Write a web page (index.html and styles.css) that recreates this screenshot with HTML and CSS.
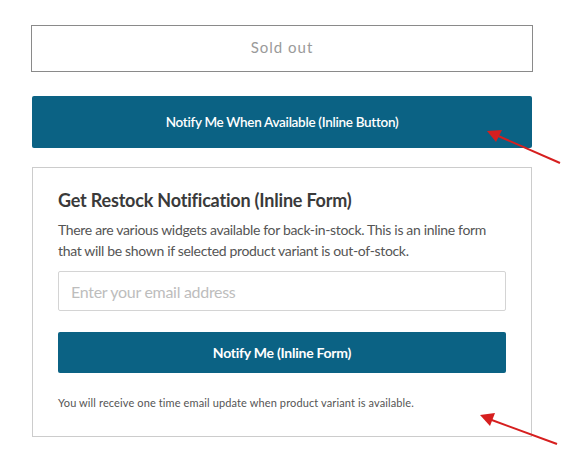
FILE: index.html
```html
<!DOCTYPE html>
<html>
<head>
<meta charset="utf-8">
<link rel="stylesheet" href="styles.css">
</head>
<body>
<div class="page">
  <div class="soldout">Sold out</div>
  <button class="btn btn-inline">Notify Me When Available (Inline Button)</button>
  <div class="form-box">
    <h2 class="form-title">Get Restock Notification (Inline Form)</h2>
    <p class="form-desc">There are various widgets available for back-in-stock. This is an inline form that will be shown if selected product variant is out-of-stock.</p>
    <input class="email" type="text" placeholder="Enter your email address">
    <button class="btn btn-form">Notify Me (Inline Form)</button>
    <p class="form-note">You will receive one time email update when product variant is available.</p>
  </div>
  <svg class="arrows" width="580" height="468" viewBox="0 0 580 468">
    <g stroke="#d61f1f" stroke-width="2" fill="none">
      <line x1="560" y1="163" x2="496" y2="135"/>
      <line x1="557" y1="444" x2="489" y2="419"/>
    </g>
    <g fill="#d61f1f">
      <polygon points="487,131 502,130 496,142"/>
      <polygon points="480,415 495,413 490,426"/>
    </g>
  </svg>
</div>
</body>
</html>
```

FILE: styles.css
```css
html, body {
  margin: 0;
  padding: 0;
  background: #ffffff;
}
.page {
  position: relative;
  width: 580px;
  height: 468px;
  padding: 25px 0 0 31px;
  box-sizing: border-box;
  font-family: Lato, "Liberation Sans", sans-serif;
}
.soldout {
  width: 502px;
  height: 47px;
  box-sizing: border-box;
  border: 1px solid #8a8a8a;
  padding-bottom: 3px;
  display: flex;
  align-items: center;
  justify-content: center;
  color: #9a9a9a;
  font-size: 15px;
  letter-spacing: 1px;
}
.btn {
  display: block;
  border: none;
  border-radius: 2px;
  background: #0b6284;
  color: #ffffff;
  font-family: Lato, "Liberation Sans", sans-serif;
  cursor: pointer;
  padding: 0;
}
.btn-inline {
  margin: 24px 0 0 1px;
  width: 500px;
  height: 52px;
  font-size: 13.5px;
  font-weight: 600;
  letter-spacing: -0.3px;
}
.form-box {
  margin: 19px 0 0 1px;
  width: 500px;
  box-sizing: border-box;
  border: 1px solid #cccccc;
  padding: 20px 25px 25px 25px;
}
.form-title {
  margin: 0;
  font-size: 18px;
  line-height: 24px;
  font-weight: 700;
  color: #3a3a3a;
  letter-spacing: -0.2px;
}
.form-desc {
  margin: 7px 0 0 0;
  font-size: 14px;
  line-height: 21px;
  color: #555555;
  letter-spacing: -0.33px;
}
.email {
  display: block;
  margin-top: 10px;
  width: 448px;
  height: 40px;
  box-sizing: border-box;
  border: 1px solid #d4d4d4;
  border-radius: 2px;
  padding: 0 12px;
  font-family: Lato, "Liberation Sans", sans-serif;
  font-size: 16px;
  letter-spacing: -0.3px;
  outline: none;
}
.email::placeholder {
  color: #bdbdbd;
}
.btn-form {
  margin-top: 21px;
  width: 448px;
  height: 41px;
  font-size: 14px;
  font-weight: 700;
  letter-spacing: -0.25px;
}
.form-note {
  margin: 22px 0 0 0;
  font-size: 11px;
  line-height: 16px;
  color: #555555;
  letter-spacing: 0.12px;
}
.arrows {
  position: absolute;
  left: 0;
  top: 0;
  pointer-events: none;
}
```
